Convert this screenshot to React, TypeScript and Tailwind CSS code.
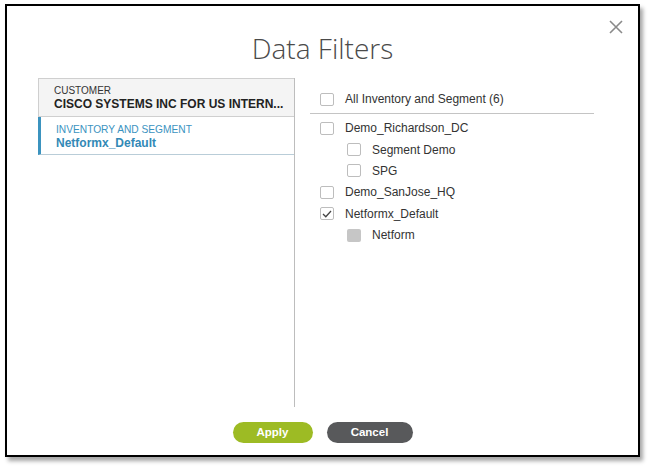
import React from 'react'

type Item = { label: string; indent?: boolean; state?: 'checked' | 'disabled' }

const items: Item[] = [
  { label: 'Demo_Richardson_DC' },
  { label: 'Segment Demo', indent: true },
  { label: 'SPG', indent: true },
  { label: 'Demo_SanJose_HQ' },
  { label: 'Netformx_Default', state: 'checked' },
  { label: 'Netform', indent: true, state: 'disabled' },
]

function Box({ state }: { state?: 'checked' | 'disabled' }) {
  if (state === 'disabled') {
    return <span className="block w-[14px] h-[13px] rounded-[2px] bg-[#c6c6c6]" />
  }
  return (
    <span className="flex items-center justify-center w-[14px] h-[13px] rounded-[2px] border border-[#bdbdbd] bg-white">
      {state === 'checked' && (
        <svg width="10" height="8" viewBox="0 0 10 8" fill="none">
          <path d="M1 4l2.8 2.8L9 1" stroke="#444" strokeWidth="1.3" />
        </svg>
      )}
    </span>
  )
}

function Row({ item }: { item: Item }) {
  return (
    <div className={`flex items-center h-[21.4px] gap-[11px] ${item.indent ? 'pl-[52px]' : 'pl-[25px]'}`}>
      <Box state={item.state} />
      <span className="text-[12px] text-[#333]">{item.label}</span>
    </div>
  )
}

export default function App() {
  return (
    <div className="w-[650px] h-[468px] bg-white pt-[4px] pl-[5px]" style={{ fontFamily: '"Liberation Sans", Arial, sans-serif' }}>
      <div className="relative w-[635px] h-[453px] border-2 border-black bg-white shadow-[3px_4px_4px_rgba(0,0,0,0.35)] flex flex-col">
        <button className="absolute top-[14px] right-[15px] w-[14px] h-[14px]">
          <svg width="14" height="14" viewBox="0 0 14 14">
            <path d="M1 1l12 12M13 1L1 13" stroke="#8a8a8a" strokeWidth="1.6" />
          </svg>
        </button>
        <h1
          className="mt-[26px] h-[32px] leading-[32px] text-center text-[28px] font-light text-[#4a4a4a]"
          style={{ fontFamily: '"Open Sans", "Liberation Sans", sans-serif' }}
        >
          Data Filters
        </h1>
        <div className="mt-[14px] flex h-[329px]">
          <div className="ml-[31px] w-[257px] border-r border-[#bdbdbd] flex flex-col">
            <div className="h-[39px] bg-[#f4f4f4] border-t border-l border-b border-[#cfcfcf] pl-[15px] pt-[1px] flex flex-col justify-center">
              <div className="text-[10px] leading-[12px] text-[#333]">CUSTOMER</div>
              <div className="text-[12px] leading-[14px] font-bold text-[#222]">
                CISCO SYSTEMS INC FOR US INTERN...
              </div>
            </div>
            <div className="h-[38px] border-l-[3px] border-l-[#3b93bf] border-b border-b-[#b9cdd8] pl-[15px] pt-[3px] flex flex-col justify-center">
              <div className="text-[10.2px] leading-[12px] text-[#3b93bf]">INVENTORY AND SEGMENT</div>
              <div className="text-[12px] leading-[14px] font-bold text-[#3289b6]">Netformx_Default</div>
            </div>
          </div>
          <div className="flex-1 pt-[10px]">
            <div className="flex items-center h-[22px] gap-[11px] pl-[25px]">
              <Box />
              <span className="text-[12px] text-[#333]">All Inventory and Segment (6)</span>
            </div>
            <div className="ml-[15px] w-[284px] h-[1px] bg-[#c4c4c4] mt-[3px] mb-[3.5px]" />
            {items.map((it) => (
              <Row key={it.label} item={it} />
            ))}
          </div>
        </div>
        <div className="mt-[15px] flex justify-center gap-[14px]">
          <button className="w-[80px] h-[21px] rounded-full bg-[#9dbb24] text-white text-[11.5px] font-bold">Apply</button>
          <button className="w-[86px] h-[21px] rounded-full bg-[#58595b] text-white text-[11.5px] font-bold">Cancel</button>
        </div>
      </div>
    </div>
  )
}
